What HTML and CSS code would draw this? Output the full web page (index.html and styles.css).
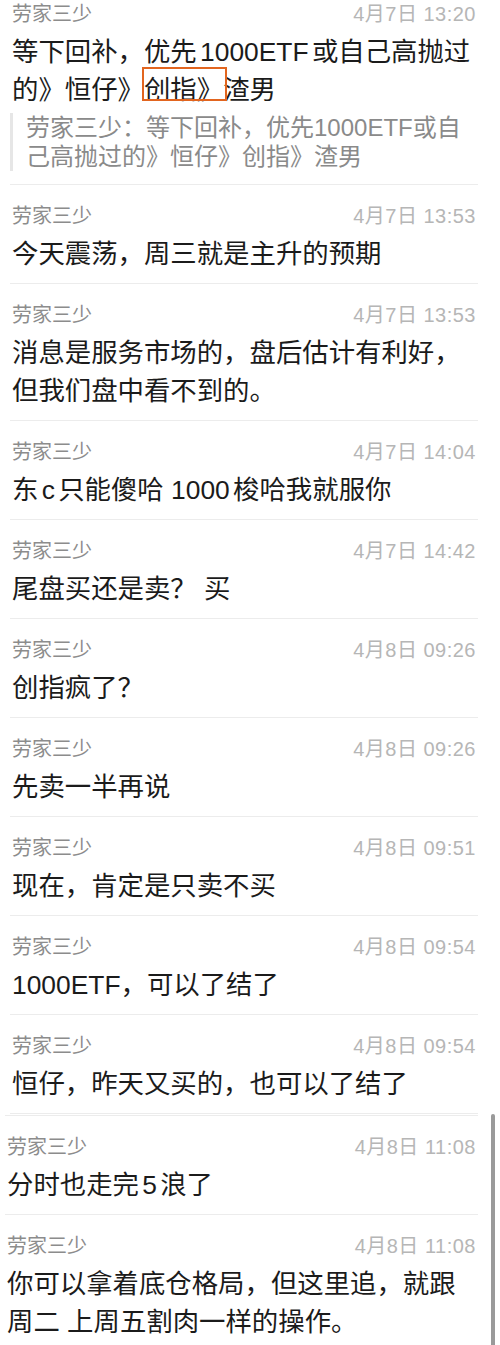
FILE: index.html
```html
<!DOCTYPE html>
<html lang="zh-CN">
<head>
    <meta charset="UTF-8">
    <meta name="viewport" content="width=device-width, initial-scale=1.0">
    <title>劳家三少</title>
    <link rel="stylesheet" href="styles.css">
</head>
<body>

    <!-- First capture -->
    <div class="thread">
        <div class="msg msg-first">
            <div class="msg-head"><span class="msg-name">劳家三少</span><span class="msg-time">4月7日 13:20</span></div>
            <p class="msg-text">等下回补，优先1000ETF或自己高抛过的》恒仔》<span class="mark">创指》</span>渣男</p>
            <div class="msg-quote">劳家三少：等下回补，优先1000ETF或自己高抛过的》恒仔》创指》渣男</div>
        </div>
        <div class="msg">
            <div class="msg-head"><span class="msg-name">劳家三少</span><span class="msg-time">4月7日 13:53</span></div>
            <p class="msg-text">今天震荡，周三就是主升的预期</p>
        </div>
        <div class="msg">
            <div class="msg-head"><span class="msg-name">劳家三少</span><span class="msg-time">4月7日 13:53</span></div>
            <p class="msg-text">消息是服务市场的，盘后估计有利好，<br>但我们盘中看不到的。</p>
        </div>
        <div class="msg">
            <div class="msg-head"><span class="msg-name">劳家三少</span><span class="msg-time">4月7日 14:04</span></div>
            <p class="msg-text">东c只能傻哈 1000梭哈我就服你</p>
        </div>
        <div class="msg">
            <div class="msg-head"><span class="msg-name">劳家三少</span><span class="msg-time">4月7日 14:42</span></div>
            <p class="msg-text">尾盘买还是卖？ 买</p>
        </div>
        <div class="msg">
            <div class="msg-head"><span class="msg-name">劳家三少</span><span class="msg-time">4月8日 09:26</span></div>
            <p class="msg-text">创指疯了？</p>
        </div>
        <div class="msg">
            <div class="msg-head"><span class="msg-name">劳家三少</span><span class="msg-time">4月8日 09:26</span></div>
            <p class="msg-text">先卖一半再说</p>
        </div>
        <div class="msg">
            <div class="msg-head"><span class="msg-name">劳家三少</span><span class="msg-time">4月8日 09:51</span></div>
            <p class="msg-text">现在，肯定是只卖不买</p>
        </div>
        <div class="msg">
            <div class="msg-head"><span class="msg-name">劳家三少</span><span class="msg-time">4月8日 09:54</span></div>
            <p class="msg-text">1000ETF，可以了结了</p>
        </div>
        <div class="msg">
            <div class="msg-head"><span class="msg-name">劳家三少</span><span class="msg-time">4月8日 09:54</span></div>
            <p class="msg-text">恒仔，昨天又买的，也可以了结了</p>
        </div>
    </div>

    <!-- Second capture, stitched below -->
    <div class="thread thread-later">
        <div class="scroll-bar"></div>
        <div class="msg">
            <div class="msg-head"><span class="msg-name">劳家三少</span><span class="msg-time">4月8日 11:08</span></div>
            <p class="msg-text">分时也走完5浪了</p>
        </div>
        <div class="msg">
            <div class="msg-head"><span class="msg-name">劳家三少</span><span class="msg-time">4月8日 11:08</span></div>
            <p class="msg-text">你可以拿着底仓格局，但这里追，就跟周二 上周五割肉一样的操作。</p>
        </div>
    </div>

</body>
</html>
```

FILE: styles.css
```css
/* Reset */
* {
    margin: 0;
    padding: 0;
    box-sizing: border-box;
}

html {
    overflow: hidden;
}

body {
    font-family: "Liberation Sans", "Noto Sans CJK SC", sans-serif;
    background-color: #fff;
    color: #1b1b1b;
}

/* Message list */
.thread {
    position: relative;
}

.msg {
    margin: 0 22px 0 10px;
    padding: 18px 2px 10px;
    border-bottom: 1px solid #ececec;
}

.msg-first {
    padding-top: 1px;
    padding-bottom: 13px;
}

/* Name + time row */
.msg-head {
    display: flex;
    justify-content: space-between;
    align-items: baseline;
    font-size: 20px;
    line-height: 26px;
}

.msg-name {
    color: #8c8c8c;
}

.msg-time {
    color: #b6b6b6;
    letter-spacing: 0.5px;
}

/* Message body */
.msg-text {
    margin-top: 6px;
    padding-right: 2px;
    font-size: 26.4px;
    line-height: 38px;
    text-autospace: normal;
}

/* Quoted reply */
.msg-quote {
    margin: 4px 0 0 -2px;
    padding-left: 13px;
    border-left: 3px solid #e6e6e6;
    font-size: 24px;
    line-height: 29px;
    color: #8a8a8a;
}

/* Orange annotation box */
.mark {
    position: relative;
}

.mark::after {
    content: "";
    position: absolute;
    left: -2px;
    right: -4px;
    top: -8px;
    bottom: 4px;
    border: 2px solid #e2651f;
}

/* Lower screenshot is shifted a little to the left */
.thread-later {
    margin-top: 1px;
    border-top: 1px solid #ececec;
    margin-left: 5px;
    margin-right: 22px;
}

.thread-later .msg {
    margin: 0;
    padding-left: 2px;
}

.scroll-bar {
    position: absolute;
    top: -2px;
    right: -17px;
    width: 4px;
    height: 260px;
    border-radius: 2px;
    background-color: #9a9a9a;
}
```
